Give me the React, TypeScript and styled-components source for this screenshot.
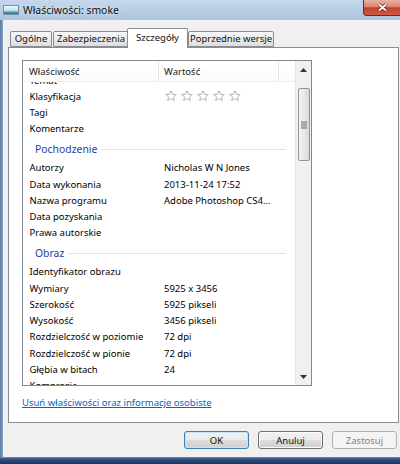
import React, { useLayoutEffect, useRef } from "react";
import styled, { createGlobalStyle } from "styled-components";

const GlobalStyle = createGlobalStyle`
  html, body {
    margin: 0;
    padding: 0;
  }
  body {
    width: 400px;
    height: 464px;
    overflow: hidden;
    font-family: "Noto Sans", "Segoe UI", sans-serif;
    font-size: 9.5px;
    color: #000;
  }
`;

const Window = styled.div`
  width: 400px;
  height: 464px;
  display: flex;
  flex-direction: column;
  background: #f0f0f0;
`;

const TitleBar = styled.div`
  height: 20px;
  display: flex;
  align-items: flex-start;
  background: linear-gradient(to bottom, #c6d8ec, #b5cbe4 60%, #adc4df);
`;

const TitleIcon = styled.svg`
  margin: 5px 0 0 3px;
  flex-shrink: 0;
`;

const TitleText = styled.div`
  margin-left: 4px;
  line-height: 20px;
  font-size: 10.4px;
  color: #111;
  text-shadow: 0 0 5px rgba(255, 255, 255, 0.9);
`;

const CloseButton = styled.div`
  margin-left: auto;
  width: 37px;
  height: 16px;
  box-sizing: border-box;
  border: 1px solid #6a2b22;
  border-top: none;
  border-right: none;
  border-radius: 0 0 0 4px;
  background: linear-gradient(
    to bottom,
    #eab1a5 0%,
    #dc8472 45%,
    #c3402c 52%,
    #cf5b43 100%
  );
  display: flex;
  align-items: center;
  justify-content: center;
`;

const Main = styled.div`
  flex: 1;
  display: flex;
`;

const LeftFrame = styled.div`
  width: 3px;
  background: linear-gradient(to right, #56799f, #86a5c8);
`;

const Client = styled.div`
  flex: 1;
  display: flex;
  flex-direction: column;
  padding: 9px 1px 8px 5px;
`;

const TabStrip = styled.div`
  height: 18px;
  display: flex;
  align-items: flex-end;
  padding-left: 2px;
`;

const Tab = styled.div<{ $w: number; $active?: boolean }>`
  position: relative;
  box-sizing: border-box;
  width: ${(p) => p.$w}px;
  height: ${(p) => (p.$active ? 20 : 16)}px;
  margin: ${(p) => (p.$active ? "0 -1px -1px -2px" : "0 0 0 1px")};
  z-index: ${(p) => (p.$active ? 2 : 1)};
  border: 1px solid #898c95;
  border-bottom: ${(p) => (p.$active ? "none" : "1px solid #898c95")};
  border-radius: 2px 2px 0 0;
  background: ${(p) =>
    p.$active
      ? "#fff"
      : "linear-gradient(to bottom, #f7f7f7, #ebebeb 50%, #dedede)"};
  display: flex;
  align-items: ${(p) => (p.$active ? "flex-start" : "center")};
  padding-top: ${(p) => (p.$active ? 3 : 0)}px;
  justify-content: center;
  white-space: nowrap;
  line-height: 12px;
  color: #111;
  &:first-child {
    margin-left: 0;
  }
`;

const Panel = styled.div`
  height: 376px;
  box-sizing: border-box;
  border: 1px solid #898c95;
  background: #fff;
  padding: 12px 0 0 13px;
  display: flex;
  flex-direction: column;
  align-items: flex-start;
`;

const ListView = styled.div`
  width: 290px;
  height: 326px;
  box-sizing: border-box;
  border: 1px solid #828790;
  display: flex;
`;

const ListMain = styled.div`
  flex: 1;
  display: flex;
  flex-direction: column;
  min-width: 0;
`;

const HeaderRow = styled.div`
  height: 21px;
  box-sizing: border-box;
  display: flex;
  border-bottom: 1px solid #eef0f2;
  background: linear-gradient(to bottom, #ffffff, #fbfbfb);
`;

const HeaderCell = styled.div<{ $w?: number; $pad?: number }>`
  ${(p) => (p.$w ? `width: ${p.$w}px;` : "flex: 1;")}
  box-sizing: border-box;
  border-right: ${(p) => (p.$w ? "1px solid #e3e5e8" : "none")};
  display: flex;
  align-items: center;
  padding: 1px 0 0 ${(p) => p.$pad ?? 5}px;
  color: #222;
`;

const ListBody = styled.div`
  flex: 1;
  overflow: hidden;
`;

const Row = styled.div`
  height: 16.25px;
  display: flex;
  align-items: center;
  white-space: nowrap;
`;

const Label = styled.div`
  width: 136px;
  box-sizing: border-box;
  padding-left: 6.5px;
  flex-shrink: 0;
`;

const Value = styled.div`
  padding-left: 5px;
  display: flex;
  align-items: center;
`;

const GroupRow = styled.div`
  height: 22.8px;
  box-sizing: border-box;
  padding: 1.6px 9px 0 12px;
  display: flex;
  align-items: center;
  color: #1e3f9b;
  font-size: 10.4px;
`;

const GroupLine = styled.div`
  flex: 1;
  height: 1px;
  margin-left: 4px;
  background: #e0e3e8;
`;

const Stars = styled.div`
  display: flex;
  gap: 4px;
  margin-left: 1px;
`;

const ScrollBar = styled.div`
  width: 16px;
  box-sizing: border-box;
  border-left: 1px solid #e6e6e6;
  background: #f0f0f0;
  display: flex;
  flex-direction: column;
  align-items: center;
`;

const ArrowBox = styled.div`
  height: 17px;
  width: 100%;
  display: flex;
  align-items: center;
  justify-content: center;
`;

const Thumb = styled.div`
  margin-top: 10px;
  width: 12px;
  height: 73px;
  box-sizing: border-box;
  border: 1px solid #959595;
  border-radius: 2px;
  background: linear-gradient(to right, #f3f3f3, #e8e8e8 50%, #d8d8d8);
  display: flex;
  align-items: center;
  justify-content: center;
`;

const Track = styled.div`
  flex: 1;
`;

const Link = styled.a`
  margin-top: 10px;
  color: #0066cc;
  text-decoration: underline;
  line-height: 13px;
  cursor: pointer;
`;

const ButtonRow = styled.div`
  margin-top: 8px;
  height: 18px;
  display: flex;
  justify-content: flex-end;
  gap: 9px;
  padding-right: 2px;
`;

const Button = styled.div<{ $variant?: "default" | "disabled" }>`
  width: 65px;
  height: 18px;
  box-sizing: border-box;
  border-radius: 3px;
  display: flex;
  align-items: center;
  justify-content: center;
  border: 1px solid
    ${(p) =>
      p.$variant === "default"
        ? "#3c7fb1"
        : p.$variant === "disabled"
        ? "#adb2b5"
        : "#707070"};
  background: ${(p) =>
    p.$variant === "disabled"
      ? "#f4f4f4"
      : "linear-gradient(to bottom, #f2f2f2, #ebebeb 50%, #dddddd 51%, #cfcfcf)"};
  box-shadow: ${(p) =>
    p.$variant === "default"
      ? "inset 0 0 0 1px #c4e5f6"
      : p.$variant === "disabled"
      ? "none"
      : "inset 0 0 0 1px #fcfcfc"};
  color: ${(p) => (p.$variant === "disabled" ? "#838383" : "#111")};
`;

const BottomFrame = styled.div`
  height: 7px;
  background: linear-gradient(to bottom, #6f92bf 0, #2f5081 2px, #1c3662);
`;

const Star = () => (
  <svg width="12" height="12" viewBox="0 0 12 12">
    <path
      d="M6 0.8 L7.5 4.2 L11.2 4.5 L8.4 6.9 L9.3 10.6 L6 8.6 L2.7 10.6 L3.6 6.9 L0.8 4.5 L4.5 4.2 Z"
      fill="#fff"
      stroke="#a9a9a9"
      strokeWidth="0.9"
      strokeLinejoin="round"
    />
  </svg>
);

type Item =
  | { kind: "group"; title: string }
  | { kind: "row"; label: string; value?: string; stars?: boolean };

// the list is scrolled: "Temat" peeks under the header, "Kompresja" is cut at the bottom
const items: Item[] = [
  { kind: "row", label: "Temat" },
  { kind: "row", label: "Klasyfikacja", stars: true },
  { kind: "row", label: "Tagi" },
  { kind: "row", label: "Komentarze" },
  { kind: "group", title: "Pochodzenie" },
  { kind: "row", label: "Autorzy", value: "Nicholas W N Jones" },
  { kind: "row", label: "Data wykonania", value: "2013-11-24 17:52" },
  { kind: "row", label: "Nazwa programu", value: "Adobe Photoshop CS4..." },
  { kind: "row", label: "Data pozyskania" },
  { kind: "row", label: "Prawa autorskie" },
  { kind: "group", title: "Obraz" },
  { kind: "row", label: "Identyfikator obrazu" },
  { kind: "row", label: "Wymiary", value: "5925 x 3456" },
  { kind: "row", label: "Szerokość", value: "5925 pikseli" },
  { kind: "row", label: "Wysokość", value: "3456 pikseli" },
  { kind: "row", label: "Rozdzielczość w poziomie", value: "72 dpi" },
  { kind: "row", label: "Rozdzielczość w pionie", value: "72 dpi" },
  { kind: "row", label: "Głębia w bitach", value: "24" },
  { kind: "row", label: "Kompresja" },
];

const tabs = [
  { name: "Ogólne", w: 42 },
  { name: "Zabezpieczenia", w: 76 },
  { name: "Szczegóły", w: 61, active: true },
  { name: "Poprzednie wersje", w: 86 },
];

export default function App() {
  const bodyRef = useRef<HTMLDivElement>(null);

  useLayoutEffect(() => {
    if (bodyRef.current) bodyRef.current.scrollTop = 10;
  }, []);

  return (
    <>
      <GlobalStyle />
      <Window>
        <TitleBar>
          <TitleIcon width="16" height="10" viewBox="0 0 16 10">
            <defs>
              <linearGradient id="sky" x1="0" y1="0" x2="0" y2="1">
                <stop offset="0" stopColor="#f4fafd" />
                <stop offset="0.55" stopColor="#bfe3ee" />
                <stop offset="0.75" stopColor="#3f9fae" />
                <stop offset="1" stopColor="#2d6f80" />
              </linearGradient>
            </defs>
            <rect x="0.5" y="0.5" width="15" height="9" fill="url(#sky)" stroke="#7d8ea0" />
          </TitleIcon>
          <TitleText>Właściwości: smoke</TitleText>
          <CloseButton>
            <svg width="11" height="9" viewBox="0 0 11 9">
              <path d="M2 1.5 L9 7.5 M9 1.5 L2 7.5" stroke="#5a1e16" strokeWidth="3.2" />
              <path d="M2 1.5 L9 7.5 M9 1.5 L2 7.5" stroke="#fff" strokeWidth="1.8" />
            </svg>
          </CloseButton>
        </TitleBar>
        <Main>
          <LeftFrame />
          <Client>
            <TabStrip>
              {tabs.map((t) => (
                <Tab key={t.name} $w={t.w} $active={t.active}>
                  {t.name}
                </Tab>
              ))}
            </TabStrip>
            <Panel>
              <ListView>
                <ListMain>
                  <HeaderRow>
                    <HeaderCell $w={136} $pad={6}>
                      Właściwość
                    </HeaderCell>
                    <HeaderCell $w={120}>Wartość</HeaderCell>
                    <HeaderCell />
                  </HeaderRow>
                  <ListBody ref={bodyRef}>
                    {items.map((it, i) =>
                      it.kind === "group" ? (
                        <GroupRow key={i}>
                          {it.title}
                          <GroupLine />
                        </GroupRow>
                      ) : (
                        <Row key={i}>
                          <Label>{it.label}</Label>
                          <Value>
                            {it.stars ? (
                              <Stars>
                                {[0, 1, 2, 3, 4].map((s) => (
                                  <Star key={s} />
                                ))}
                              </Stars>
                            ) : (
                              it.value
                            )}
                          </Value>
                        </Row>
                      )
                    )}
                  </ListBody>
                </ListMain>
                <ScrollBar>
                  <ArrowBox>
                    <svg width="7" height="4" viewBox="0 0 7 4">
                      <path d="M3.5 0 L7 4 L0 4 Z" fill="#333" />
                    </svg>
                  </ArrowBox>
                  <Thumb>
                    <svg width="6" height="8" viewBox="0 0 6 8">
                      {[0.5, 2.5, 4.5, 6.5].map((y) => (
                        <rect key={y} x="0" y={y} width="6" height="1" fill="#6f6f6f" />
                      ))}
                    </svg>
                  </Thumb>
                  <Track />
                  <ArrowBox>
                    <svg width="7" height="4" viewBox="0 0 7 4">
                      <path d="M0 0 L7 0 L3.5 4 Z" fill="#333" />
                    </svg>
                  </ArrowBox>
                </ScrollBar>
              </ListView>
              <Link>Usuń właściwości oraz informacje osobiste</Link>
            </Panel>
            <ButtonRow>
              <Button $variant="default">OK</Button>
              <Button>Anuluj</Button>
              <Button $variant="disabled">Zastosuj</Button>
            </ButtonRow>
          </Client>
        </Main>
        <BottomFrame />
      </Window>
    </>
  );
}
